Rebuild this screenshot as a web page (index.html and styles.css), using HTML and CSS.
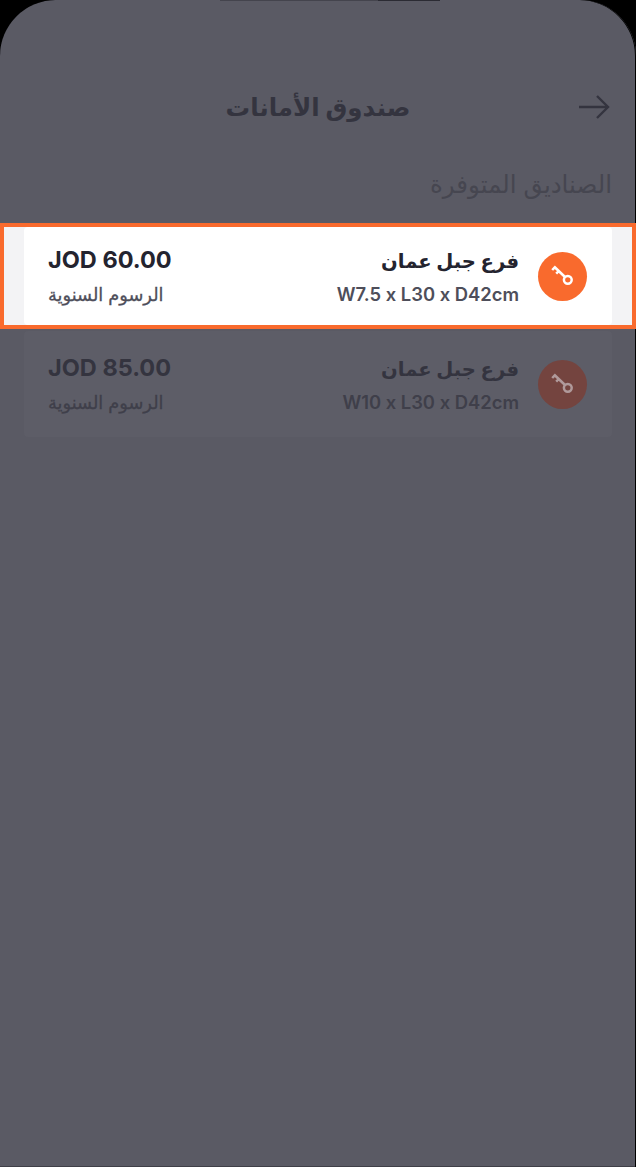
FILE: index.html
```html
<!DOCTYPE html>
<html lang="ar" dir="rtl">
<head>
<meta charset="utf-8">
<title>صندوق الأمانات</title>
<link rel="stylesheet" href="styles.css">
</head>
<body>
<main class="screen">
  <header class="topbar">
    <svg class="back" viewBox="0 0 32 26" width="32" height="26" aria-hidden="true">
      <path d="M1 13H30M19 2l11 11-11 11" fill="none" stroke="#34343f" stroke-width="2.400"/>
    </svg>
    <h1 class="title">صندوق الأمانات</h1>
  </header>
  <h2 class="section">الصناديق المتوفرة</h2>
  <section class="highlight">
    <article class="card card-active">
      <span class="badge">
        <svg viewBox="0 0 26 26" width="26" height="26" aria-hidden="true">
          <circle cx="17.800" cy="16.800" r="3.900" fill="none" stroke="#fff" stroke-width="2.500"/>
          <path d="M15 14 4 3.500M4.800 4.300 2.200 7M8.800 8 6.200 10.700" fill="none" stroke="#fff" stroke-width="2.500"/>
        </svg>
      </span>
      <div class="info">
        <div class="name">فرع جبل عمان</div>
        <div class="size">W7.5 x L30 x D42cm</div>
      </div>
      <div class="price">
        <div class="amount">JOD 60.00</div>
        <div class="fee">الرسوم السنوية</div>
      </div>
    </article>
  </section>
  <article class="card card-dim">
    <span class="badge">
      <svg viewBox="0 0 26 26" width="26" height="26" aria-hidden="true">
        <circle cx="17.800" cy="16.800" r="3.900" fill="none" stroke="#b09a9b" stroke-width="2.500"/>
        <path d="M15 14 4 3.500M4.800 4.300 2.200 7M8.800 8 6.200 10.700" fill="none" stroke="#b09a9b" stroke-width="2.500"/>
      </svg>
    </span>
    <div class="info">
      <div class="name">فرع جبل عمان</div>
      <div class="size">W10 x L30 x D42cm</div>
    </div>
    <div class="price">
      <div class="amount">JOD 85.00</div>
      <div class="fee">الرسوم السنوية</div>
    </div>
  </article>
</main>
</body>
</html>
```
FILE: styles.css
```css
* { box-sizing: border-box; }
html, body { margin: 0; height: 100%; background: #000; }
body { font-family: "Inter", "Noto Sans", "DejaVu Sans", sans-serif; overflow: hidden; }
.screen {
  position: relative;
  height: 1167px;
  background: #5a5a64;
  border-radius: 56px 56px 0 0;
  padding-top: 91px;
  box-shadow: inset -1px 0 #000, inset 0 -1px #3f3f47;
}
.screen::before {
  content: "";
  position: absolute;
  top: 0;
  left: 220px;
  width: 220px;
  height: 1px;
  background: linear-gradient(to right, #44444d 72%, #2b2b33 72%);
}
.topbar {
  position: relative;
  height: 34px;
  display: flex;
  align-items: center;
  justify-content: center;
}
.back { position: absolute; right: 26px; top: 3px; }
.title { margin: 0; font-size: 24.500px; font-weight: 700; color: #34343f; position: relative; top: -1px; }
.section {
  margin: 43px 24px 0;
  height: 32px;
  font-size: 24.500px;
  line-height: 32px;
  font-weight: 400;
  color: #464650;
}
.highlight {
  margin-top: 23px;
  height: 106px;
  border: 4px solid #f96a2d;
  background: #f3f3f5;
  padding: 0 20px;
}
.card {
  display: flex;
  align-items: center;
  height: 100%;
  padding: 0 25px 0 24px;
  border-radius: 4px;
}
.card-active { background: #fff; }
.card-dim {
  height: 106px;
  margin: 2px 24px 0;
  padding: 0 25px 0 24px;
  background: #5d5d67;
}
.badge {
  flex: none;
  width: 49px;
  height: 49px;
  border-radius: 50%;
  display: flex;
  align-items: center;
  justify-content: center;
  background: #f96a2d;
  margin-left: 19px;
}
.card-dim .badge { background: #74443f; }
.info { flex: 1; }
.name { font-size: 19.600px; font-weight: 700; line-height: 32px; color: #24242f; }
.size { font-size: 18.400px; font-weight: 600; line-height: 26px; color: #4e4e5a; direction: ltr; text-align: right; margin-top: 4px; }
.price { text-align: left; }
.amount { font-size: 23.500px; font-weight: 700; line-height: 32px; color: #24242f; direction: ltr; position: relative; top: -1px; }
.fee { font-size: 17.800px; font-weight: 400; -webkit-text-stroke: 0.3px currentColor; line-height: 26px; color: #4e4e5a; margin-top: 5px; text-align: left; white-space: nowrap; }
.card-dim .name, .card-dim .amount { color: #34343f; }
.card-dim .size, .card-dim .fee { color: #3f3f4a; }
```
